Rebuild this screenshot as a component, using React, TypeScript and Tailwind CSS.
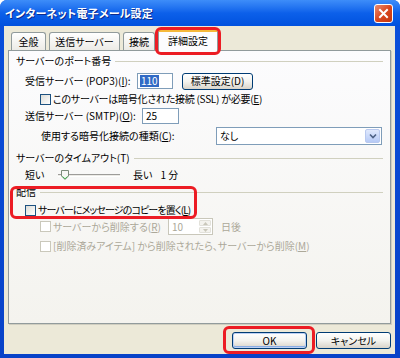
import React from "react";

function Check({ disabled = false }: { disabled?: boolean }) {
  return (
    <span
      className={
        "w-[11px] h-[11px] shrink-0 border " +
        (disabled
          ? "border-[#CAC8BB] bg-white"
          : "border-[#1C5180] bg-gradient-to-br from-[#DCDCD7] to-white")
      }
    />
  );
}

function GroupHead({ label }: { label: string }) {
  return (
    <div className="h-[14px] flex items-center gap-[4px] pr-[7px]">
      <span className="whitespace-nowrap">{label}</span>
      <div className="flex-1 h-px bg-[#D0D0BF]" />
    </div>
  );
}

function XpButton({ label, w, primary = false }: { label: string; w: string; primary?: boolean }) {
  return (
    <button
      className={
        "h-[17px] shrink-0 rounded-[3px] border border-[#003C74] bg-gradient-to-b from-white via-[#F3F3EF] to-[#D9D4CA] flex items-center justify-center leading-none " +
        w +
        (primary ? " shadow-[inset_0_0_0_1px_#BCD0F4,inset_0_-1px_0_1px_#89ADE4]" : "")
      }
    >
      {label}
    </button>
  );
}

export default function App() {
  return (
    <div className="w-[400px] h-[358px] bg-white text-black text-[10px] leading-none font-['Noto_Sans_CJK_JP',sans-serif] [font-feature-settings:'palt'] select-none">
      <div className="h-full flex flex-col rounded-t-[7px] overflow-hidden bg-gradient-to-b from-[#0A50DC] to-[#0842C8]">
        {/* Title bar */}
        <div className="h-[26px] shrink-0 flex items-center pl-[5px] pr-[7px] bg-gradient-to-b from-[#3D8DF9] via-[#0C60EA] to-[#0251DE]">
          <span className="text-white font-bold text-[11px] tracking-[0.2px] [text-shadow:1px_1px_0_#0B2A8E]">
            インターネット電子メール設定
          </span>
          <div className="ml-auto w-[19px] h-[19px] rounded-[3px] border border-white bg-gradient-to-br from-[#E88B6E] via-[#D9471E] to-[#C4370F] flex items-center justify-center">
            <svg width="11" height="11" viewBox="0 0 11 11">
              <path d="M2 2 L9 9 M9 2 L2 9" stroke="white" strokeWidth="2" strokeLinecap="square" />
            </svg>
          </div>
        </div>

        {/* Body */}
        <div className="flex-1 ml-[4px] mr-[5px] mb-[4px] bg-[#ECE9D8] flex flex-col px-[4px] pt-[3px]">
          {/* Tabs */}
          <div className="h-[21px] flex items-end pl-[3px] gap-[3px] relative z-10">
            <div className="h-[18px] w-[35px] border border-b-0 border-[#919B9C] rounded-t-[3px] bg-gradient-to-b from-white to-[#ECEBE6] flex items-center justify-center">
              全般
            </div>
            <div className="h-[18px] w-[71px] border border-b-0 border-[#919B9C] rounded-t-[3px] bg-gradient-to-b from-white to-[#ECEBE6] flex items-center justify-center">
              送信サーバー
            </div>
            <div className="h-[18px] w-[32px] border border-b-0 border-[#919B9C] rounded-t-[3px] bg-gradient-to-b from-white to-[#ECEBE6] flex items-center justify-center">
              接続
            </div>
            <div className="relative h-[22px] -mb-px w-[60px]">
              <div className="h-full border-x border-[#919B9C] rounded-t-[3px] bg-[#FCFCFE] border-t-[3px] border-t-[#F5B93A] flex items-center justify-center pb-[1px]">
                詳細設定
              </div>
              <div className="absolute -left-[3px] -right-[3px] -top-[2px] -bottom-[4px] border-[3px] border-[#EC1C24] rounded-[6px]" />
            </div>
          </div>

          {/* Panel */}
          <div className="h-[274px] border border-[#919B9C] shadow-[1px_1px_0_#D0CEC0] bg-gradient-to-b from-[#FCFCFE] to-[#F4F3EE] pl-[7px] flex flex-col">
            <div className="mt-[3px]">
              <GroupHead label="サーバーのポート番号" />
            </div>

            <div className="mt-[5px] h-[16px] flex items-center pl-[9px]">
              <span className="w-[112px] shrink-0 whitespace-nowrap">受信サーバー (POP3)(<u>I</u>):</span>
              <div className="w-[36px] h-[16px] shrink-0 border border-[#7F9DB9] bg-white flex items-center pl-[2px]">
                <span className="bg-[#316AC5] text-white px-[1px] h-[12px] flex items-center">110</span>
              </div>
              <div className="ml-[9px]">
                <XpButton label="標準設定(D)" w="w-[71px]" />
              </div>
            </div>

            <div className="mt-[4px] h-[12px] flex items-center pl-[24px] gap-[2px]">
              <Check />
              <span className="whitespace-nowrap tracking-[-0.25px]">このサーバーは暗号化された接続 (SSL) が必要(<u>E</u>)</span>
            </div>

            <div className="mt-[3px] h-[16px] flex items-center pl-[9px]">
              <span className="w-[117px] shrink-0 whitespace-nowrap">送信サーバー (SMTP)(<u>O</u>):</span>
              <div className="w-[37px] h-[16px] shrink-0 border border-[#7F9DB9] bg-white flex items-center pl-[3px]">25</div>
            </div>

            <div className="mt-[3px] h-[18px] flex items-center pl-[25px]">
              <span className="w-[175px] shrink-0 whitespace-nowrap">使用する暗号化接続の種類(<u>C</u>):</span>
              <div className="w-[166px] h-[18px] shrink-0 border border-[#7F9DB9] bg-white flex items-center pl-[3px] pr-px">
                <span className="flex-1">なし</span>
                <div className="w-[15px] h-[14px] rounded-[2px] border border-[#B9C9EF] bg-gradient-to-b from-[#E0E9FD] to-[#B6CAF6] flex items-center justify-center">
                  <svg width="8" height="6" viewBox="0 0 8 6">
                    <path d="M1 1.5 L4 4.5 L7 1.5" stroke="#4D6185" strokeWidth="1.6" fill="none" />
                  </svg>
                </div>
              </div>
            </div>

            <div className="mt-[6px]">
              <GroupHead label="サーバーのタイムアウト(T)" />
            </div>

            <div className="mt-[3px] h-[14px] flex items-center pl-[9px]">
              <span className="w-[33px] shrink-0">短い</span>
              <div className="relative w-[62px] h-[14px] shrink-0 flex items-center">
                <div className="w-full h-[3px] border-t border-[#9D9C99] border-b border-b-white bg-[#ECEBE6]" />
                <svg className="absolute left-[3px] top-[2px]" width="8" height="10" viewBox="0 0 8 10">
                  <path d="M0.5 0.5 H7.5 V6 L4 9.5 L0.5 6 Z" fill="#F7F7F4" stroke="#7C8A7A" />
                  <path d="M1.5 6.5 L4 8.8 L6.5 6.5" stroke="#3DB24A" fill="none" />
                </svg>
              </div>
              <span className="ml-[13px]">長い</span>
              <span className="ml-[8px]">1 分</span>
            </div>

            <div className="mt-[3px]">
              <GroupHead label="配信" />
            </div>

            <div className="mt-[5px] h-[12px] flex items-center pl-[9px]">
              <div className="relative flex items-center gap-[2px]">
                <Check />
                <span className="whitespace-nowrap tracking-[-0.9px]">サーバーにメッセージのコピーを置く(<u>L</u>)</span>
                <div className="absolute -left-[15px] -right-[7px] -top-[19px] -bottom-[3px] border-[3px] border-[#EC1C24] rounded-[6px]" />
              </div>
            </div>

            <div className="mt-[2px] h-[17px] flex items-center pl-[24px] text-[#ACA899]">
              <Check disabled />
              <span className="ml-[2px] w-[115px] shrink-0 whitespace-nowrap">サーバーから削除する(<u>R</u>)</span>
              <div className="w-[45px] h-[17px] shrink-0 border border-[#C9C7BA] bg-white flex items-center pl-[3px] pr-px">
                <span className="flex-1">10</span>
                <div className="w-[12px] h-[13px] flex flex-col gap-px">
                  <div className="flex-1 rounded-[1px] border border-[#E2E1DA] bg-[#F4F3EE] flex items-center justify-center">
                    <svg width="5" height="3" viewBox="0 0 5 3"><path d="M0 3 L2.5 0 L5 3 Z" fill="#C9C7BA" /></svg>
                  </div>
                  <div className="flex-1 rounded-[1px] border border-[#E2E1DA] bg-[#F4F3EE] flex items-center justify-center">
                    <svg width="5" height="3" viewBox="0 0 5 3"><path d="M0 0 L2.5 3 L5 0 Z" fill="#C9C7BA" /></svg>
                  </div>
                </div>
              </div>
              <span className="ml-[8px]">日後</span>
            </div>

            <div className="mt-[5px] h-[12px] flex items-center pl-[24px] gap-[2px] text-[#ACA899]">
              <Check disabled />
              <span className="whitespace-nowrap">[削除済みアイテム] から削除されたら、サーバーから削除(<u>M</u>)</span>
            </div>
          </div>

          {/* Buttons */}
          <div className="mt-[8px] flex justify-end gap-[9px]">
            <div className="relative">
              <XpButton label="OK" w="w-[75px]" primary />
              <div className="absolute -left-[9px] -right-[8px] -top-[6px] -bottom-[5px] border-[3px] border-[#EC1C24] rounded-[6px]" />
            </div>
            <XpButton label="キャンセル" w="w-[75px]" />
          </div>
        </div>
      </div>
    </div>
  );
}
